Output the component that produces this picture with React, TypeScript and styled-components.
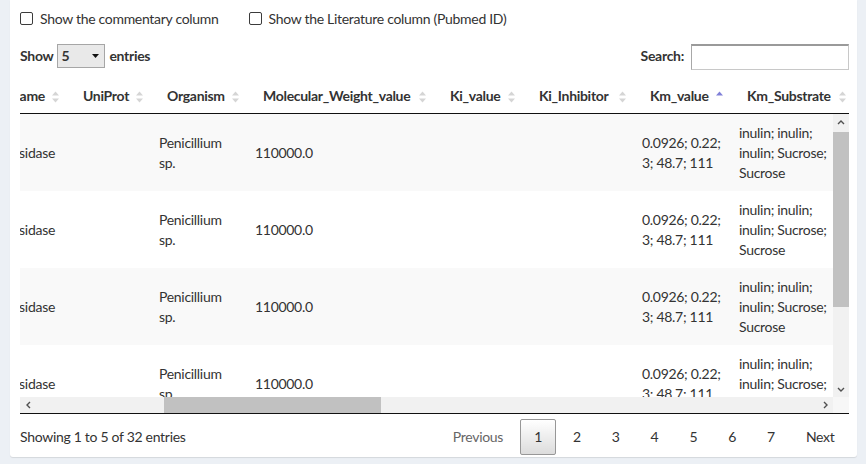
import React, { useLayoutEffect, useRef } from "react";
import styled, { createGlobalStyle, css } from "styled-components";

const GlobalStyle = createGlobalStyle`
  html, body { margin: 0; padding: 0; background: #ecf0f5; }
  body {
    font-family: "Lato", "Open Sans", sans-serif;
    font-size: 14px;
    line-height: 20px;
    letter-spacing: -0.3px;
    color: #333;
  }
  * { box-sizing: border-box; }
`;

const Page = styled.div`
  width: 866px;
  height: 464px;
  overflow: hidden;
  padding: 0 9px 7px 10px;
`;

const Card = styled.div`
  height: 457px;
  background: #fff;
  border-radius: 0 0 3px 3px;
  box-shadow: 0 1px 1px rgba(0, 0, 0, 0.1);
  padding: 0 8px 3px 10px;
  display: flex;
  flex-direction: column;
`;

const CheckRow = styled.div`
  height: 37px;
  display: flex;
  align-items: center;
  gap: 30px;
`;

const CheckLabel = styled.label`
  display: flex;
  align-items: center;
  gap: 7px;
  font-weight: 400;
  color: #333;
`;

const Box = styled.input`
  appearance: none;
  margin: 0;
  width: 13px;
  height: 13px;
  border: 1px solid #3b3b3b;
  border-radius: 2px;
  background: #fff;
`;

const ControlsRow = styled.div`
  height: 38px;
  margin-bottom: 5px;
  display: flex;
  align-items: center;
  justify-content: space-between;
`;

const LengthLabel = styled.label`
  display: flex;
  align-items: center;
  gap: 4px;
  font-weight: 700;
`;

const SelectWrap = styled.span`
  position: relative;
  display: inline-flex;
`;

const Select = styled.select`
  appearance: none;
  width: 48px;
  height: 24px;
  padding: 0 0 0 3px;
  border: 1px solid #a6a6a6;
  border-radius: 0;
  background: #e9e9e9;
  font: inherit;
  font-weight: 700;
  color: #333;
`;

const SelectArrow = styled.svg`
  position: absolute;
  right: 6px;
  top: 10px;
  pointer-events: none;
`;

const SearchLabel = styled.label`
  display: flex;
  align-items: center;
  gap: 7px;
  font-weight: 700;
`;

const SearchInput = styled.input`
  width: 158px;
  height: 26px;
  margin-top: 2px;
  border: 1px solid #c8c8c8;
  border-top: 2px solid #9a9a9a;
  border-left-color: #a8a8a8;
  background: #fff;
`;

const ScrollWrap = styled.div`
  display: flex;
  flex-direction: column;
`;

const ScrollHead = styled.div`
  overflow: hidden;
  border-bottom: 1px solid #111;
`;

const BodyRow = styled.div`
  display: flex;
`;

const Viewport = styled.div`
  flex: 1;
  height: 283px;
  overflow: hidden;
`;

const Table = styled.table`
  table-layout: fixed;
  border-collapse: separate;
  border-spacing: 0;
`;

const Th = styled.th<{ $alignRight?: boolean }>`
  position: relative;
  padding: 6px ${(p) => (p.$alignRight ? 20 : 18)}px 7px 18px;
  text-align: ${(p) => (p.$alignRight ? "right" : "left")};
  font-weight: 700;
  white-space: nowrap;
  overflow: hidden;
`;

const SortMark = styled.svg`
  position: absolute;
  right: 6px;
  top: 50%;
  transform: translateY(-50%);
`;

const Tr = styled.tr<{ $odd: boolean }>`
  background: ${(p) => (p.$odd ? "#f9f9f9" : "#fff")};
  & + & > td {
    border-top: 1px solid #ddd;
  }
`;

const Td = styled.td<{ $alignRight?: boolean; $nowrap?: boolean; $tight?: boolean }>`
  padding: 8px ${(p) => (p.$tight ? 0 : 10)}px 8px 10px;
  vertical-align: middle;
  text-align: ${(p) => (p.$alignRight ? "right" : "left")};
  white-space: ${(p) => (p.$nowrap ? "nowrap" : "normal")};
  height: 77px;
`;

const VScroll = styled.div`
  width: 16px;
  height: 283px;
  background: #f1f1f1;
  display: flex;
  flex-direction: column;
`;

const HScrollRow = styled.div`
  display: flex;
  height: 16px;
  border-bottom: 1px solid #111;
  box-sizing: content-box;
`;

const HScroll = styled.div`
  flex: 1;
  background: #f1f1f1;
  display: flex;
`;

const Corner = styled.div`
  width: 16px;
  background: #f7f7f7;
`;

const ArrowBtn = styled.div`
  flex: 0 0 16px;
  width: 16px;
  height: 16px;
  display: flex;
  align-items: center;
  justify-content: center;
`;

const VTrack = styled.div`
  flex: 1;
  display: flex;
  flex-direction: column;
`;

const HTrack = styled.div`
  flex: 1;
  display: flex;
`;

const VThumb = styled.div<{ $offset: number; $size: number }>`
  margin-top: ${(p) => p.$offset}px;
  height: ${(p) => p.$size}px;
  background: #c1c1c1;
`;

const HThumb = styled.div<{ $offset: number; $size: number }>`
  margin-left: ${(p) => p.$offset}px;
  width: ${(p) => p.$size}px;
  background: #c1c1c1;
`;

const Footer = styled.div`
  margin-top: 5px;
  height: 35px;
  display: flex;
  align-items: center;
  justify-content: space-between;
`;

const Info = styled.div`
  color: #333;
`;

const Pager = styled.div`
  display: flex;
  align-items: center;
`;

const PageBtn = styled.a<{ $current?: boolean; $disabled?: boolean }>`
  display: inline-block;
  margin-left: 2px;
  padding: 7px 13.5px;
  border: 1px solid transparent;
  border-radius: 2px;
  text-align: center;
  color: #333;
  cursor: pointer;
  ${(p) =>
    p.$disabled &&
    css`
      color: #666;
      cursor: default;
    `}
  ${(p) =>
    p.$current &&
    css`
      border-color: #979797;
      background: linear-gradient(to bottom, #ffffff 0%, #dcdcdc 100%);
    `}
`;

type Col = { key: string; title: string; width: number; sort?: "asc"; tight?: boolean };

const columns: Col[] = [
  { key: "name", title: "Name", width: 200 },
  { key: "uniprot", title: "UniProt", width: 84 },
  { key: "organism", title: "Organism", width: 96 },
  { key: "mw", title: "Molecular_Weight_value", width: 187 },
  { key: "ki", title: "Ki_value", width: 89 },
  { key: "kiInh", title: "Ki_Inhibitor", width: 111 },
  { key: "km", title: "Km_value", width: 97, sort: "asc", tight: true },
  { key: "kmSub", title: "Km_Substrate", width: 123 },
  { key: "kcat", title: "Kcat_value", width: 110 },
  { key: "kcatSub", title: "Kcat_Substrate", width: 130 },
  { key: "ph", title: "pH_optimum", width: 110 },
  { key: "temp", title: "Temperature_optimum", width: 170 },
];

const tableWidth = columns.reduce((s, c) => s + c.width, 0);

const row: Record<string, string> = {
  name: "β-fructofuranosidase",
  uniprot: "",
  organism: "Penicillium sp.",
  mw: "110000.0",
  ki: "",
  kiInh: "",
  km: "0.0926; 0.22; 3; 48.7; 111",
  kmSub: "inulin; inulin; inulin; Sucrose; Sucrose",
  kcat: "",
  kcatSub: "",
  ph: "",
  temp: "",
};

const rows = [row, row, row, row, row];

const SCROLL_X = 155;

function SortIcon({ sort }: { sort?: "asc" }) {
  return (
    <SortMark width={7} height={12} viewBox="0 0 7 12">
      <path d="M3.5 0.5 L7 4.5 L0 4.5 Z" fill={sort === "asc" ? "#8080d8" : "#d5d5d5"} />
      {sort !== "asc" && <path d="M0 7.5 L7 7.5 L3.5 11.5 Z" fill="#d5d5d5" />}
    </SortMark>
  );
}

function Chevron({ dir }: { dir: "up" | "down" | "left" | "right" }) {
  const paths: Record<string, string> = {
    up: "M1 5 L4 2 L7 5",
    down: "M1 2 L4 5 L7 2",
    left: "M5 1 L2 4 L5 7",
    right: "M2 1 L5 4 L2 7",
  };
  const vertical = dir === "up" || dir === "down";
  return (
    <svg width={vertical ? 8 : 7} height={vertical ? 7 : 8} viewBox={vertical ? "0 0 8 7" : "0 0 7 8"}>
      <path d={paths[dir]} fill="none" stroke="#505050" strokeWidth={1.4} />
    </svg>
  );
}

function ColGroup() {
  return (
    <colgroup>
      {columns.map((c) => (
        <col key={c.key} style={{ width: c.width }} />
      ))}
    </colgroup>
  );
}

export default function App() {
  const headRef = useRef<HTMLDivElement>(null);
  const bodyRef = useRef<HTMLDivElement>(null);

  useLayoutEffect(() => {
    if (headRef.current) headRef.current.scrollLeft = SCROLL_X;
    if (bodyRef.current) bodyRef.current.scrollLeft = SCROLL_X;
  }, []);

  return (
    <>
      <GlobalStyle />
      <Page>
        <Card>
          <CheckRow>
            <CheckLabel>
              <Box type="checkbox" />
              Show the commentary column
            </CheckLabel>
            <CheckLabel>
              <Box type="checkbox" />
              Show the Literature column (Pubmed ID)
            </CheckLabel>
          </CheckRow>

          <ControlsRow>
            <LengthLabel>
              Show
              <SelectWrap>
                <Select defaultValue="5">
                  <option value="5">5</option>
                  <option value="10">10</option>
                  <option value="25">25</option>
                  <option value="50">50</option>
                </Select>
                <SelectArrow width={7} height={4} viewBox="0 0 7 4">
                  <path d="M0 0 L7 0 L3.5 4 Z" fill="#111" />
                </SelectArrow>
              </SelectWrap>
              entries
            </LengthLabel>
            <SearchLabel>
              Search:
              <SearchInput type="search" />
            </SearchLabel>
          </ControlsRow>

          <ScrollWrap>
            <ScrollHead ref={headRef}>
              <Table style={{ width: tableWidth }}>
                <ColGroup />
                <thead>
                  <tr>
                    {columns.map((c, i) => (
                      <Th key={c.key} $alignRight={i === 0}>
                        {c.title}
                        <SortIcon sort={c.sort} />
                      </Th>
                    ))}
                  </tr>
                </thead>
              </Table>
            </ScrollHead>

            <BodyRow>
              <Viewport ref={bodyRef}>
                <Table style={{ width: tableWidth }}>
                  <ColGroup />
                  <tbody>
                    {rows.map((r, ri) => (
                      <Tr key={ri} $odd={ri % 2 === 0}>
                        {columns.map((c, i) => (
                          <Td key={c.key} $alignRight={i === 0} $nowrap={i === 0} $tight={c.tight}>
                            {r[c.key]}
                          </Td>
                        ))}
                      </Tr>
                    ))}
                  </tbody>
                </Table>
              </Viewport>
              <VScroll>
                <ArrowBtn>
                  <Chevron dir="up" />
                </ArrowBtn>
                <VTrack>
                  <VThumb $offset={2} $size={175} />
                </VTrack>
                <ArrowBtn>
                  <Chevron dir="down" />
                </ArrowBtn>
              </VScroll>
            </BodyRow>

            <HScrollRow>
              <HScroll>
                <ArrowBtn>
                  <Chevron dir="left" />
                </ArrowBtn>
                <HTrack>
                  <HThumb $offset={128} $size={217} />
                </HTrack>
                <ArrowBtn>
                  <Chevron dir="right" />
                </ArrowBtn>
              </HScroll>
              <Corner />
            </HScrollRow>
          </ScrollWrap>

          <Footer>
            <Info>Showing 1 to 5 of 32 entries</Info>
            <Pager>
              <PageBtn $disabled>Previous</PageBtn>
              <PageBtn $current>1</PageBtn>
              <PageBtn>2</PageBtn>
              <PageBtn>3</PageBtn>
              <PageBtn>4</PageBtn>
              <PageBtn>5</PageBtn>
              <PageBtn>6</PageBtn>
              <PageBtn>7</PageBtn>
              <PageBtn>Next</PageBtn>
            </Pager>
          </Footer>
        </Card>
      </Page>
    </>
  );
}
